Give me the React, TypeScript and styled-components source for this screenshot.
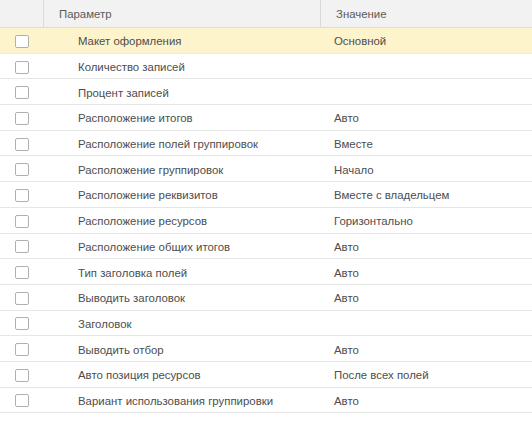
import styled, { createGlobalStyle } from "styled-components";

const GlobalStyle = createGlobalStyle`
  html, body {
    margin: 0;
    padding: 0;
    background: #ffffff;
  }
  body {
    font-family: "Liberation Sans", Arial, sans-serif;
  }
`;

const Table = styled.div`
  width: 532px;
  display: flex;
  flex-direction: column;
  color: #4d4d4d;
  font-size: 11.4px;
`;

const HeaderRow = styled.div`
  display: grid;
  grid-template-columns: 43px 277px 1fr;
  height: 28px;
  box-sizing: border-box;
  background: #f2f2f2;
  border-bottom: 1px solid #dcdcdc;
  color: #5a5a5a;
`;

const HeaderCell = styled.div<{ $divider?: boolean }>`
  display: flex;
  align-items: center;
  padding-left: ${(p) => (p.$divider ? "15px" : "0")};
  border-left: ${(p) => (p.$divider ? "1px solid #dadada" : "none")};
`;

const Row = styled.div<{ $active?: boolean }>`
  display: grid;
  grid-template-columns: 43px 277px 1fr;
  height: 25.7px;
  box-sizing: border-box;
  padding-top: 2px;
  background: ${(p) => (p.$active ? "#fdf4cc" : "#ffffff")};
  border-bottom: 1px solid ${(p) => (p.$active ? "#f5ecc6" : "#e6e6e6")};
`;

const CheckCell = styled.div`
  display: flex;
  align-items: center;
  padding-left: 15px;
`;

const Checkbox = styled.span`
  width: 14px;
  height: 13px;
  box-sizing: border-box;
  border: 1px solid #b0b0b0;
  border-radius: 2px;
  background: #ffffff;
`;

const NameCell = styled.div`
  display: flex;
  align-items: center;
  padding-left: 35px;
  white-space: nowrap;
`;

const ValueCell = styled.div`
  display: flex;
  align-items: center;
  padding-left: 14px;
  white-space: nowrap;
`;

const rows: [string, string][] = [
  ["Макет оформления", "Основной"],
  ["Количество записей", ""],
  ["Процент записей", ""],
  ["Расположение итогов", "Авто"],
  ["Расположение полей группировок", "Вместе"],
  ["Расположение группировок", "Начало"],
  ["Расположение реквизитов", "Вместе с владельцем"],
  ["Расположение ресурсов", "Горизонтально"],
  ["Расположение общих итогов", "Авто"],
  ["Тип заголовка полей", "Авто"],
  ["Выводить заголовок", "Авто"],
  ["Заголовок", ""],
  ["Выводить отбор", "Авто"],
  ["Авто позиция ресурсов", "После всех полей"],
  ["Вариант использования группировки", "Авто"],
];

function App() {
  return (
    <>
      <GlobalStyle />
      <Table>
        <HeaderRow>
          <HeaderCell />
          <HeaderCell $divider>Параметр</HeaderCell>
          <HeaderCell $divider>Значение</HeaderCell>
        </HeaderRow>
        {rows.map(([name, value], i) => (
          <Row key={name} $active={i === 0}>
            <CheckCell>
              <Checkbox />
            </CheckCell>
            <NameCell>{name}</NameCell>
            <ValueCell>{value}</ValueCell>
          </Row>
        ))}
      </Table>
    </>
  );
}

export default App;
